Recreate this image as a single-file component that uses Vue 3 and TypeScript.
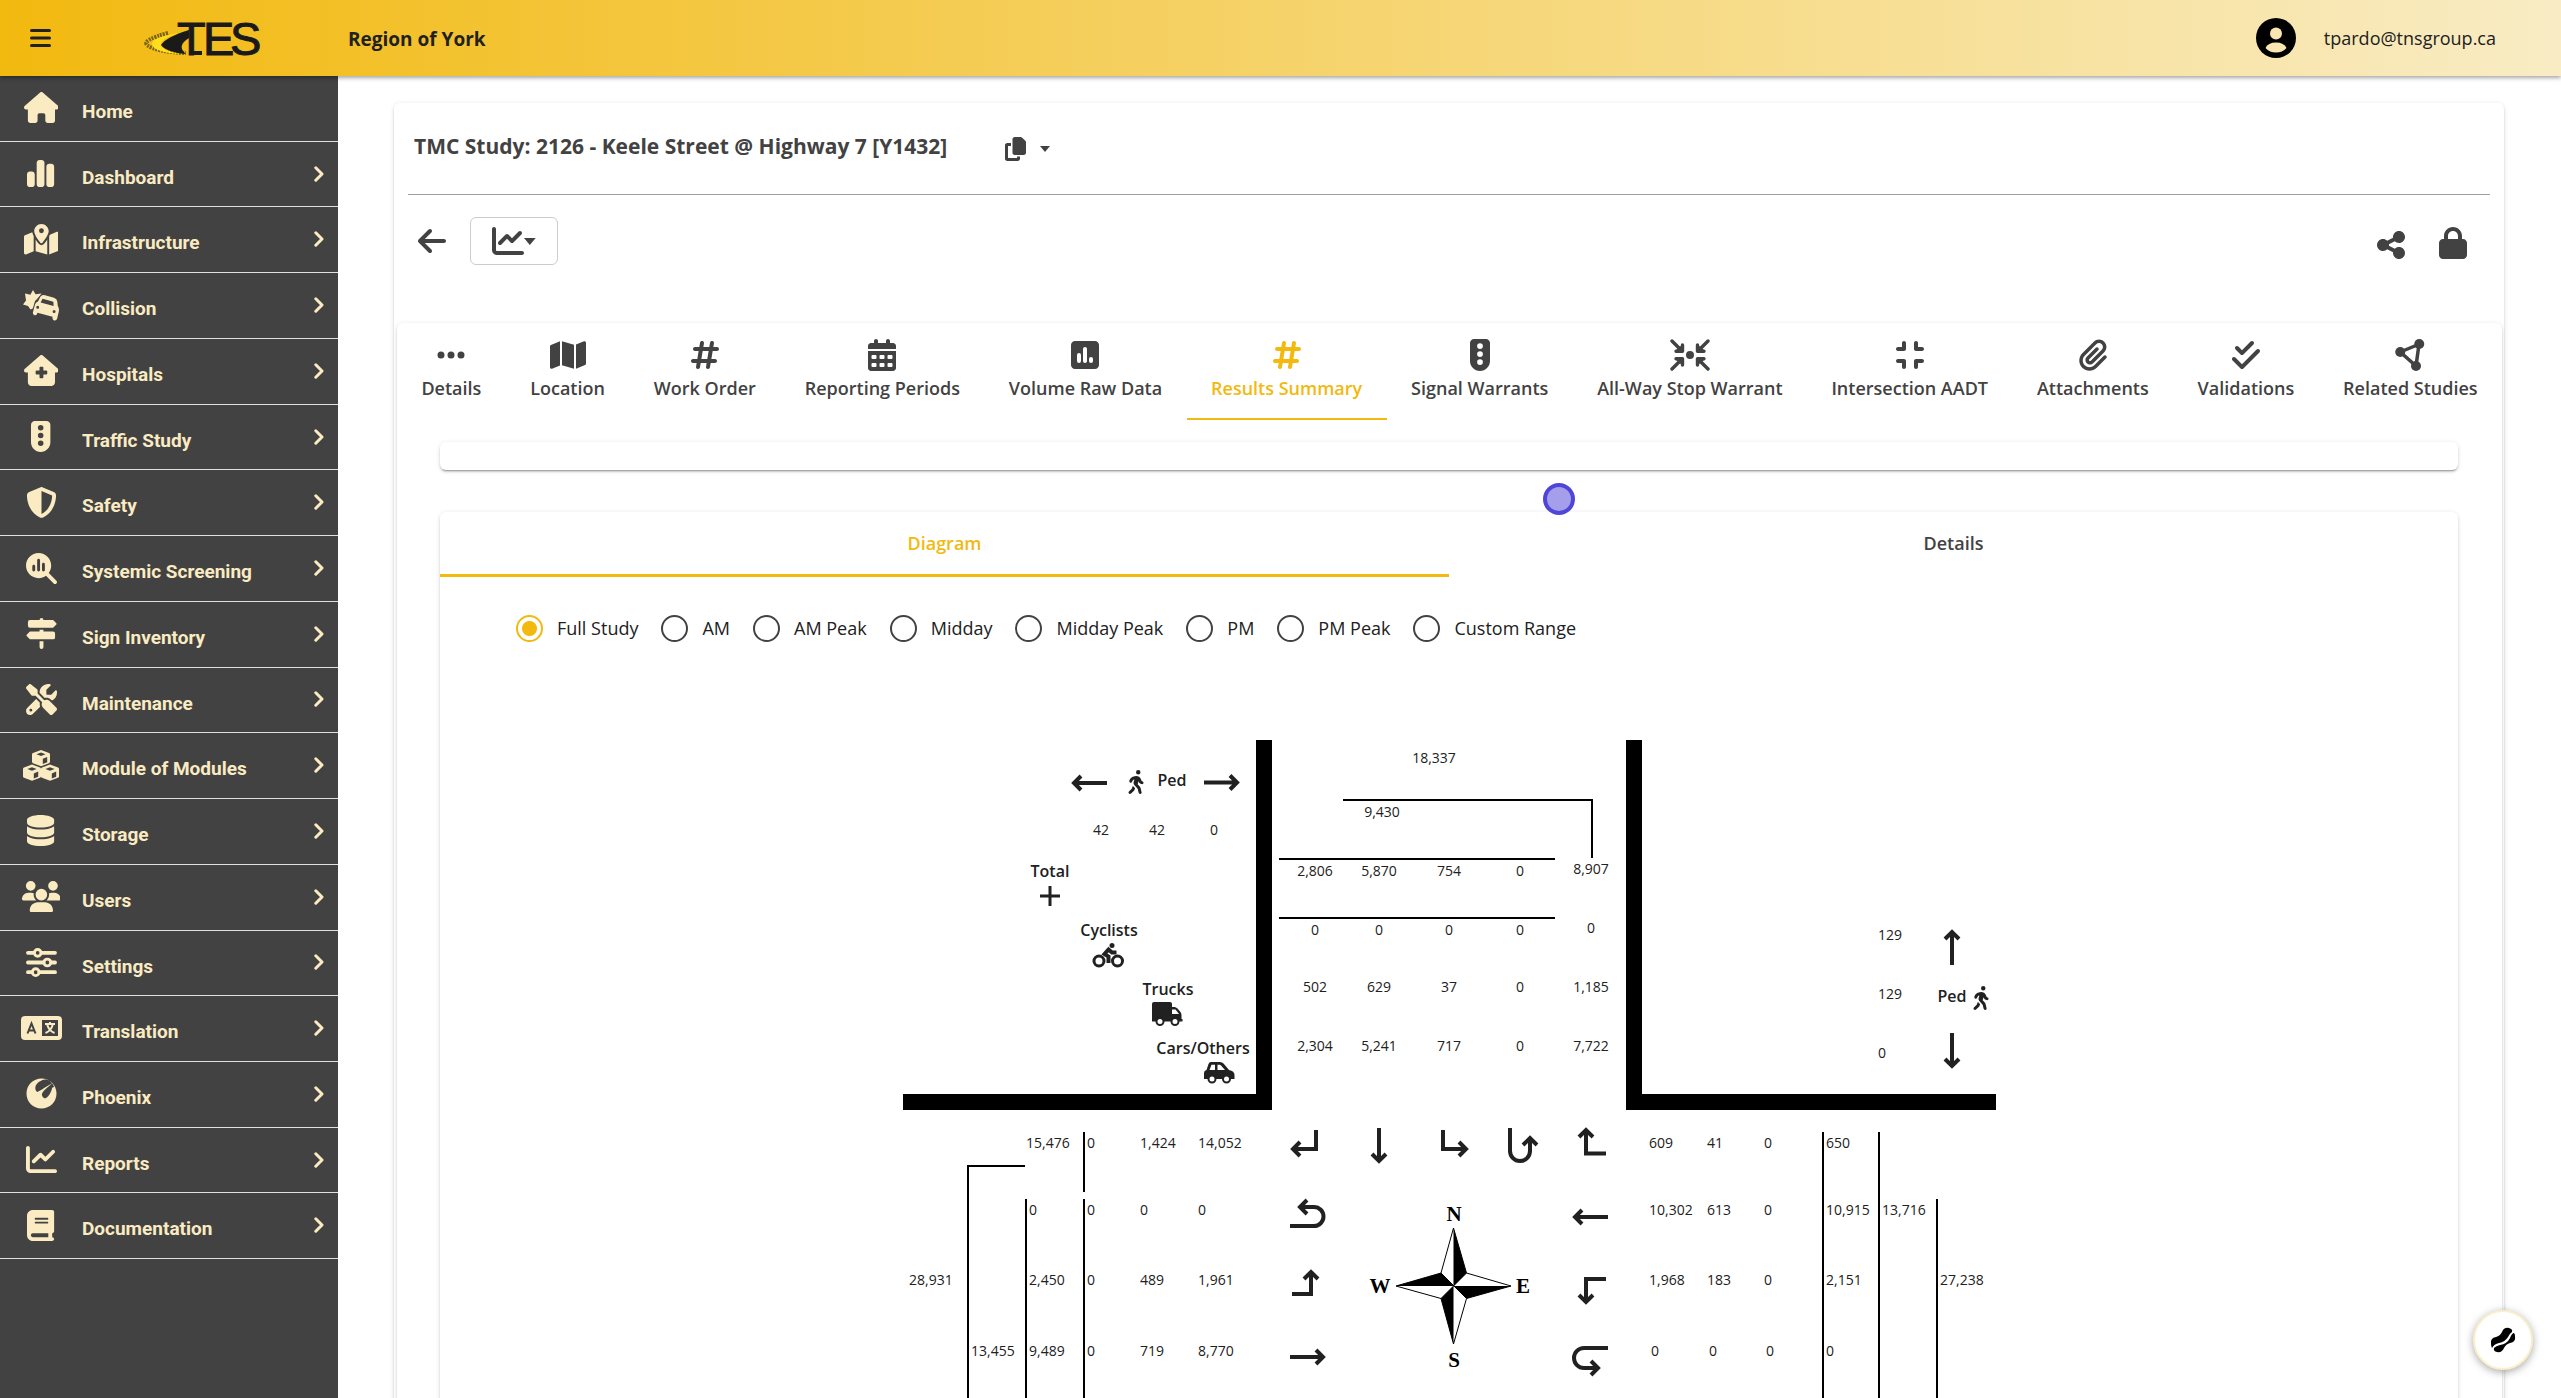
<script setup lang="ts">
import { h, ref } from 'vue'

interface Part { d: string; s?: number }
interface Glyph { w: number; h: number; parts: Part[] }

const fa = (w: number, d: string): Glyph => ({ w, h: 512, parts: [{ d }] })
const cube = (x: number, y: number): Part => ({
  d: `M${x} ${y - 8}l8 3q1 .4 1 1.4v7.4q0 1-1 1.4l-8 3-8-3q-1-.4-1-1.4v-7.4q0-1 1-1.4zM${x} ${y - 5.4}l-4.6 1.7 4.6 1.8 4.6-1.8zM${x + 1.8} ${y + 0.8}v5.2l4.4-1.8v-5.2z`,
})
const dot = (x: number, y: number, r: number) => `M${x - r} ${y}a${r} ${r} 0 1 0 ${2 * r} 0a${r} ${r} 0 1 0 ${-2 * r} 0z`
const cell = (x: number, y: number) => `M${x} ${y}h48q16 0 16 16v32q0 16-16 16h-48q-16 0-16-16v-32q0-16 16-16z`

const glyphs: Record<string, Glyph> = {
  house: fa(576, 'M575.8 255.5c0 18-15 32.1-32 32.1l-32 0 .7 160.2c0 2.7-.2 5.4-.5 8.1l0 16.2c0 22.1-17.9 40-40 40l-16 0c-1.1 0-2.2 0-3.3-.1c-1.4 .1-2.8 .1-4.2 .1L416 512l-24 0c-22.1 0-40-17.9-40-40l0-24 0-64c0-17.7-14.3-32-32-32l-64 0c-17.7 0-32 14.3-32 32l0 64 0 24c0 22.1-17.9 40-40 40l-24 0-31.9 0c-1.5 0-3-.1-4.5-.2c-1.2 .1-2.4 .2-3.6 .2l-16 0c-22.1 0-40-17.9-40-40l0-112c0-.9 0-1.9 .1-2.8l0-69.7-32 0c-18 0-32-14-32-32.1c0-9 3-17 10-24L266.4 8c7-7 15-8 22-8s15 2 21 7L564.8 231.5c8 7 12 15 11 24z'),
  chart: fa(448, 'M160 80c0-26.5 21.5-48 48-48l32 0c26.5 0 48 21.5 48 48l0 352c0 26.5-21.5 48-48 48l-32 0c-26.5 0-48-21.5-48-48l0-352zM0 272c0-26.5 21.5-48 48-48l32 0c26.5 0 48 21.5 48 48l0 160c0 26.5-21.5 48-48 48l-32 0c-26.5 0-48-21.5-48-48L0 272zM368 96l32 0c26.5 0 48 21.5 48 48l0 288c0 26.5-21.5 48-48 48l-32 0c-26.5 0-48-21.5-48-48l0-288c0-26.5 21.5-48 48-48z'),
  mapdot: fa(576, 'M408 120c0 54.6-73.1 151.9-105.2 192c-7.7 9.6-22 9.6-29.6 0C241.1 271.9 168 174.6 168 120C168 53.7 221.7 0 288 0s120 53.7 120 120zm8 80.4c3.5-6.9 6.7-13.8 9.6-20.6c.5-1.2 1-2.5 1.5-3.7l116-46.4C558.9 123.4 576 135 576 152l0 270.8c0 9.8-6 18.6-15.1 22.3L416 503l0-302.6zM137.6 138.3c2.4 14.1 7.2 28.3 12.8 41.5c2.9 6.8 6.1 13.7 9.6 20.6l0 251.4L32.9 502.7C17.1 509 0 497.4 0 480.4L0 209.6c0-9.8 6-18.6 15.1-22.3l122.6-49zM327.8 332c13.9-17.4 35.7-45.7 56.2-77l0 249.3L192 449.4 192 255c20.5 31.3 42.3 59.6 56.2 77c20.5 25.6 59.1 25.6 79.6 0zM288 152a40 40 0 1 0 0-80 40 40 0 1 0 0 80z'),
  crash: { w: 36, h: 31, parts: [
    { d: 'M10 0L12.5 4.2 18.6 3.4 14.5 8.5 12 11 9.8 18.5 7.5 19.4 5 16 0 14.5 3 10.5 2 3.6 7.4 4.8Z' },
    { d: 'M17.5 6.5Q19.5 4.6 22 5.2L31 7.7Q34 8.6 34.3 11.5L34.8 16Q36.4 18 35.8 21.5L34.2 28.5Q33.4 31 31 30.4 29 29.8 29.6 26.8L14.5 22.8Q13.6 26 11.4 25.2 9.4 24.6 10 22L12 14.6Q13 12 15 11.5ZM19.6 8.8L17.6 12.4 30.6 16 30.4 11.7ZM13.2 17.2a1.5 1.5 0 1 0 3 0a1.5 1.5 0 1 0 -3 0zM29.6 21.6a1.5 1.5 0 1 0 3 0a1.5 1.5 0 1 0 -3 0z' }] },
  hospital: fa(576, 'M575.8 255.5c0 18-15 32.1-32 32.1l-32 0 .7 160.2c0 35.5-22.5 64.2-56.5 64.2L128 512c-35.3 0-64-28.7-64-64l0-160.4-32 0c-18 0-32-14-32-32.1c0-9 3-17 10-24L266.4 8c7-7 15-8 22-8s15 2 21 7L564.8 231.5c8 7 12 15 11 24zM256 208v48h-48q-16 0-16 16v32q0 16 16 16h48v48q0 16 16 16h32q16 0 16-16v-48h48q16 0 16-16v-32q0-16-16-16h-48v-48q0-16-16-16h-32q-16 0-16 16z'),
  signal: fa(320, 'M64 0C28.7 0 0 28.7 0 64L0 352c0 88.4 71.6 160 160 160s160-71.6 160-160l0-288c0-35.3-28.7-64-64-64L64 0z' + dot(160, 112, 46) + dot(160, 240, 46) + dot(160, 368, 46)),
  shield: fa(512, 'M256 0c4.6 0 9.2 1 13.4 2.9L457.7 82.8c22 9.3 38.4 31 38.3 57.2c-.5 99.2-41.3 280.7-213.6 363.2c-16.7 8-36.1 8-52.8 0C57.3 420.7 16.5 239.2 16 140c-.1-26.2 16.3-47.9 38.3-57.2L242.7 2.9C246.8 1 251.4 0 256 0zm0 66.8l0 378.1C394 378 431.1 230.1 432 141.4L256 66.8z'),
  search: fa(512, 'M416 208c0 45.9-14.9 88.3-40 122.7L502.6 457.4c12.5 12.5 12.5 32.8 0 45.3s-32.8 12.5-45.3 0L330.7 376c-34.4 25.2-76.8 40-122.7 40C93.1 416 0 322.9 0 208S93.1 0 208 0S416 93.1 416 208zm-312 8l0 64c0 13.3 10.7 24 24 24s24-10.7 24-24l0-64c0-13.3-10.7-24-24-24s-24 10.7-24 24zm80-96l0 160c0 13.3 10.7 24 24 24s24-10.7 24-24l0-160c0-13.3-10.7-24-24-24s-24 10.7-24 24zm80 64l0 96c0 13.3 10.7 24 24 24s24-10.7 24-24l0-96c0-13.3-10.7-24-24-24s-24 10.7-24 24z'),
  signs: fa(512, 'M224 32q0-32 32-32t32 32h153.4q7 0 11.3 4.7l48 48q11 11.3 0 22.6l-48 48q-4.300 4.7-11.3 4.7H64q-32 0-32-32V64q0-32 32-32zM224 192h64v32h160q32 0 32 32v64q0 32-32 32H70.6q-7 0-11.3-4.7l-48-48q-11-11.3 0-22.6l48-48q4.3-4.7 11.3-4.7H224zM224 384h64v96q0 32-32 32t-32-32z'),
  tools: fa(512, 'M78.6 5C69.1-2.4 55.6-1.5 47 7L7 47c-8.5 8.5-9.4 22-2.1 31.6l80 104c4.5 5.9 11.6 9.4 19 9.4l54.1 0 109 109c-14.7 29-10 65.4 14.3 89.6l112 112c12.5 12.5 32.8 12.5 45.3 0l64-64c12.5-12.5 12.5-32.8 0-45.3l-112-112c-24.2-24.2-60.6-29-89.6-14.3l-109-109 0-54.1c0-7.5-3.5-14.5-9.4-19L78.6 5zM19.9 396.1C7.2 408.8 0 426.1 0 444.1C0 481.6 30.4 512 67.9 512c18 0 35.3-7.2 48-19.9L233.7 374.3c-7.8-20.9-9-43.6-3.6-65.1l-61.7-61.7L19.9 396.1zM512 144c0-10.5-1.1-20.7-3.2-30.5c-2.4-11.2-16.1-14.1-24.2-6l-63.9 63.9c-3 3-7.1 4.7-11.3 4.7L352 176c-8.8 0-16-7.2-16-16l0-57.4c0-4.2 1.7-8.3 4.7-11.3l63.9-63.9c8.1-8.1 5.2-21.8-6-24.2C388.7 1.1 378.5 0 368 0C288.5 0 224 64.5 224 144l0 .8 85.3 85.3c36-9.1 75.8 .5 104 28.7L429 274.5c49-23 83-72.8 83-130.5zM56 432a24 24 0 1 1 48 0 24 24 0 1 1 -48 0z'),
  cubes: { w: 36, h: 31, parts: [cube(18, 8), cube(9, 22.6), cube(27, 22.6)] },
  database: fa(448, 'M448 80l0 48c0 44.2-100.3 80-224 80S0 172.2 0 128L0 80C0 35.8 100.3 0 224 0S448 35.8 448 80zM393.2 214.7c20.8-7.4 39.9-16.9 54.8-28.6L448 288c0 44.2-100.3 80-224 80S0 332.2 0 288L0 186.1c14.9 11.8 34 21.2 54.8 28.6C99.7 230.7 159.5 240 224 240s124.3-9.3 169.2-25.3zM0 346.1c14.9 11.8 34 21.2 54.8 28.6C99.7 390.7 159.5 400 224 400s124.3-9.3 169.2-25.3c20.8-7.4 39.9-16.9 54.8-28.6l0 85.9c0 44.2-100.3 80-224 80S0 476.2 0 432l0-85.9z'),
  users: fa(640, 'M144 0a80 80 0 1 1 0 160A80 80 0 1 1 144 0zM512 0a80 80 0 1 1 0 160A80 80 0 1 1 512 0zM0 298.7C0 239.8 47.8 192 106.7 192l42.7 0c15.9 0 31 3.5 44.6 9.7c-1.3 7.2-1.9 14.7-1.9 22.3c0 38.2 16.8 72.5 43.3 96c-.2 0-.4 0-.7 0L21.3 320C9.6 320 0 310.4 0 298.7zM405.3 320c-.2 0-.4 0-.7 0c26.6-23.5 43.3-57.8 43.3-96c0-7.6-.7-15-1.9-22.3c13.6-6.3 28.7-9.7 44.6-9.7l42.7 0C592.2 192 640 239.8 640 298.7c0 11.8-9.6 21.3-21.3 21.3l-213.3 0zM224 224a96 96 0 1 1 192 0 96 96 0 1 1 -192 0zM128 485.3C128 411.7 187.7 352 261.3 352l117.3 0C452.3 352 512 411.7 512 485.3c0 14.7-11.9 26.7-26.7 26.7l-330.7 0c-14.7 0-26.7-11.9-26.7-26.7z'),
  sliders: { w: 512, h: 512, parts: [
    { d: 'M32 96H130M256 96H480M32 256H290M414 256H480M32 416H98M222 416H480', s: 62 },
    { d: dot(193, 96, 56) + dot(352, 256, 56) + dot(160, 416, 56), s: 48 }] },
  phoenix: fa(512, 'M256 8C390 8 504 115 504 256C504 395 395 504 256 504C118 504 8 395 8 256C8 115 120 8 256 8ZM345 22C240 30 170 85 155 150C150 185 160 215 185 232C215 215 265 195 300 165L445 78C350 165 270 215 262 270C265 320 300 345 330 330C380 300 420 225 432 160L462 150C455 100 400 50 345 22Z'),
  line: fa(512, 'M64 64c0-17.7-14.3-32-32-32S0 46.3 0 64L0 400c0 44.2 35.8 80 80 80l400 0c17.7 0 32-14.3 32-32s-14.3-32-32-32L80 416c-8.8 0-16-7.2-16-16L64 64zm406.6 86.6c12.5-12.5 12.5-32.8 0-45.3s-32.8-12.5-45.3 0L320 210.7l-57.4-57.4c-12.5-12.5-32.8-12.5-45.3 0l-112 112c-12.5 12.5-12.5 32.8 0 45.3s32.8 12.5 45.3 0L240 221.3l57.4 57.4c12.5 12.5 32.8 12.5 45.3 0l128-128z'),
  book: fa(448, 'M96 0C43 0 0 43 0 96L0 416c0 53 43 96 96 96l288 0 32 0c17.7 0 32-14.3 32-32s-14.3-32-32-32l0-64c17.7 0 32-14.3 32-32l0-320c0-17.7-14.3-32-32-32L384 0 96 0zm0 384l256 0 0 64L96 448c-17.7 0-32-14.3-32-32s14.3-32 32-32zm32-240c0-8.8 7.2-16 16-16l192 0c8.8 0 16 7.2 16 16s-7.2 16-16 16l-192 0c-8.8 0-16-7.2-16-16zm16 48l192 0c8.8 0 16 7.2 16 16s-7.2 16-16 16l-192 0c-8.8 0-16-7.2-16-16s7.2-16 16-16z'),
  bars: { w: 448, h: 512, parts: [{ d: 'M32 96H416M32 256H416M32 416H416', s: 64 }] },
  chevron: { w: 10, h: 16, parts: [{ d: 'M1.8 1.8L8 8 1.8 14.2', s: 3 }] },
  caret: { w: 10, h: 6, parts: [{ d: 'M0 0H10L5 6Z' }] },
  back: fa(448, 'M9.4 233.4c-12.5 12.5-12.5 32.8 0 45.3l160 160c12.5 12.5 32.8 12.5 45.3 0s12.5-32.8 0-45.3L109.2 288 416 288c17.7 0 32-14.3 32-32s-14.3-32-32-32l-306.7 0L214.6 118.6c12.5-12.5 12.5-32.8 0-45.3s-32.8-12.5-45.3 0l-160 160z'),
  copy: fa(448, 'M208 0L332.1 0c12.7 0 24.9 5.1 33.9 14.1l67.9 67.9c9 9 14.1 21.2 14.1 33.9L448 336c0 26.5-21.5 48-48 48l-192 0c-26.5 0-48-21.5-48-48l0-288c0-26.5 21.5-48 48-48zM48 128l80 0 0 64-64 0 0 256 192 0 0-32 64 0 0 48c0 26.5-21.5 48-48 48L48 512c-26.5 0-48-21.5-48-48L0 176c0-26.5 21.5-48 48-48z'),
  share: fa(448, 'M352 224c53 0 96-43 96-96s-43-96-96-96s-96 43-96 96c0 4 .2 8 .7 11.9l-94.1 47C145.4 170.2 121.9 160 96 160c-53 0-96 43-96 96s43 96 96 96c25.9 0 49.4-10.2 66.6-26.9l94.1 47c-.5 3.9-.7 7.8-.7 11.9c0 53 43 96 96 96s96-43 96-96s-43-96-96-96c-25.9 0-49.4 10.2-66.6 26.9l-94.1-47c.5-3.9 .7-7.8 .7-11.9s-.2-8-.7-11.9l94.1-47C302.6 213.8 326.1 224 352 224z'),
  lock: fa(448, 'M144 144l0 48 160 0 0-48c0-44.2-35.8-80-80-80s-80 35.8-80 80zM80 192l0-48C80 64.5 144.5 0 224 0s144 64.5 144 144l0 48 16 0c35.3 0 64 28.7 64 64l0 192c0 35.3-28.7 64-64 64L64 512c-35.3 0-64-28.7-64-64L0 256c0-35.3 28.7-64 64-64l16 0z'),
  dots: fa(448, dot(64, 256, 56) + dot(224, 256, 56) + dot(384, 256, 56)),
  map: fa(576, 'M384 476.1L192 421.2l0-385.3L384 90.8l0 385.3zm32-1.2l0-386.5L543.1 37.5c15.8-6.3 32.9 5.3 32.9 22.3l0 334.8c0 9.8-6 18.6-15.1 22.3L416 474.8zM15.1 95.1L160 37.2l0 386.5L32.9 474.5C17.1 480.8 0 469.2 0 452.2L0 117.4c0-9.8 6-18.6 15.1-22.3z'),
  hash: fa(448, 'M181.3 32.4c17.4 2.9 29.2 19.4 26.3 36.8L197.8 128l95.1 0 11.5-69.3c2.9-17.4 19.4-29.2 36.8-26.3s29.2 19.4 26.3 36.8L357.8 128l58.2 0c17.7 0 32 14.3 32 32s-14.3 32-32 32l-68.9 0L325.8 320l58.2 0c17.7 0 32 14.3 32 32s-14.3 32-32 32l-68.9 0-11.5 69.3c-2.9 17.4-19.4 29.2-36.8 26.3s-29.2-19.4-26.3-36.8l9.8-58.7-95.1 0-11.5 69.3c-2.9 17.4-19.4 29.2-36.8 26.3s-29.2-19.4-26.3-36.8L90.2 384 32 384c-17.7 0-32-14.3-32-32s14.3-32 32-32l68.9 0 21.3-128L64 192c-17.7 0-32-14.3-32-32s14.3-32 32-32l68.9 0 11.5-69.3c2.9-17.4 19.4-29.2 36.8-26.3zM187.1 192L165.8 320l95.1 0 21.3-128-95.1 0z'),
  calendar: fa(448, 'M128 0c17.7 0 32 14.3 32 32l0 32 128 0 0-32c0-17.7 14.3-32 32-32s32 14.3 32 32l0 32 48 0c26.5 0 48 21.5 48 48l0 48L0 160l0-48C0 85.5 21.5 64 48 64l48 0 0-32c0-17.7 14.3-32 32-32zM0 192l448 0 0 272c0 26.5-21.5 48-48 48L48 512c-26.5 0-48-21.5-48-48L0 192z' + cell(72, 256) + cell(200, 256) + cell(328, 256) + cell(72, 384) + cell(200, 384) + cell(328, 384)),
  poll: fa(448, 'M448 96c0-35.3-28.7-64-64-64L64 32C28.7 32 0 60.7 0 96L0 416c0 35.3 28.7 64 64 64l320 0c35.3 0 64-28.7 64-64l0-320zM192 160a32 32 0 0 1 64 0V352a32 32 0 0 1 -64 0zM96 256a32 32 0 0 1 64 0V352a32 32 0 0 1 -64 0zM288 320a32 32 0 0 1 64 0V352a32 32 0 0 1 -64 0z'),
  converge: { w: 40, h: 32, parts: [
    { d: 'M2 2L11 11M38 2L29 11M2 30L11 21M38 30L29 21M6 12.3H12.5V6M34 12.3H27.5V6M6 19.7H12.5V26M34 19.7H27.5V26', s: 3.4 },
    { d: dot(20, 16, 4) + 'M6 11H12V6ZM34 11H28V6ZM6 21H12V26ZM34 21H28V26Z' }] },
  compress: fa(448, 'M160 64c0-17.7-14.3-32-32-32s-32 14.3-32 32l0 64-64 0c-17.7 0-32 14.3-32 32s14.3 32 32 32l96 0c17.7 0 32-14.3 32-32l0-96zM32 320c-17.7 0-32 14.3-32 32s14.3 32 32 32l64 0 0 64c0 17.7 14.3 32 32 32s32-14.3 32-32l0-96c0-17.7-14.3-32-32-32l-96 0zM352 64c0-17.7-14.3-32-32-32s-32 14.3-32 32l0 96c0 17.7 14.3 32 32 32l96 0c17.7 0 32-14.3 32-32s-14.3-32-32-32l-64 0 0-64zM320 320c-17.7 0-32 14.3-32 32l0 96c0 17.7 14.3 32 32 32s32-14.3 32-32l0-64 64 0c17.7 0 32-14.3 32-32s-14.3-32-32-32l-96 0z'),
  clip: fa(448, 'M364.2 83.8c-24.4-24.4-64-24.4-88.4 0l-184 184c-42.1 42.1-42.1 110.3 0 152.4s110.3 42.1 152.4 0l152-152c10.9-10.9 28.7-10.9 39.6 0s10.9 28.7 0 39.6l-152 152c-64 64-167.6 64-231.6 0s-64-167.6 0-231.6l184-184c46.3-46.3 121.3-46.3 167.6 0s46.3 121.3 0 167.6l-176 176c-28.6 28.6-75 28.6-103.6 0s-28.6-75 0-103.6l144-144c10.9-10.9 28.7-10.9 39.6 0s10.9 28.7 0 39.6l-144 144c-6.7 6.7-6.7 17.7 0 24.4s17.7 6.7 24.4 0l176-176c24.4-24.4 24.4-64 0-88.4z'),
  checks: fa(448, 'M342.6 86.6c12.5-12.5 12.5-32.8 0-45.3s-32.8-12.5-45.3 0L160 178.7l-57.4-57.4c-12.5-12.5-32.8-12.5-45.3 0s-12.5 32.8 0 45.3l80 80c12.5 12.5 32.8 12.5 45.3 0l160-160zm96 128c12.5-12.5 12.5-32.8 0-45.3s-32.8-12.5-45.3 0L160 402.7 54.6 297.4c-12.5-12.5-32.8-12.5-45.3 0s-12.5 32.8 0 45.3l128 128c12.5 12.5 32.8 12.5 45.3 0l256-256z'),
  nodes: { w: 512, h: 512, parts: [{ d: 'M100 208L400 84L352 432Z', s: 56 }, { d: dot(100, 208, 80) }, { d: dot(404, 80, 80) }, { d: dot(352, 432, 80) }] },
  walk: fa(320, 'M160 48a48 48 0 1 1 96 0 48 48 0 1 1 -96 0zM126.5 199.3c-1 .4-1.9 .8-2.9 1.2l-8 3.5c-16.4 7.3-29 21.2-34.7 38.2l-2.6 7.8c-5.6 16.8-23.7 25.8-40.5 20.2s-25.8-23.7-20.2-40.5l2.6-7.8c11.4-34.1 36.6-61.9 69.4-76.5l8-3.5c20.8-9.2 43.3-14 66.1-14c44.6 0 84.8 26.8 101.9 67.9L281 232.7l21.4 10.7c15.8 7.9 22.2 27.1 14.3 42.9s-27.1 22.2-42.9 14.3L247 287.3c-10.3-5.2-18.4-13.8-22.8-24.5l-9.6-23-19.3 65.5 49.5 54c5.4 5.9 9.2 13 11.2 20.8l23 92.1c4.3 17.1-6.1 34.5-23.3 38.8s-34.5-6.1-38.8-23.3l-22-88.1-70.7-77.1c-14.8-16.1-20.3-38.6-14.7-59.7l16.9-63.5zM68.7 398l25-62.4c2.1 3 4.5 5.8 7 8.6l40.7 44.4-14.5 36.2c-2.4 6-6 11.5-10.6 16.1L54.6 502.6c-12.5 12.5-32.8 12.5-45.3 0s-12.5-32.8 0-45.3L68.7 398z'),
}

const Icon = (props: { name: string }) => {
  const g = glyphs[props.name]
  return h('svg', { class: 'icon', viewBox: `0 0 ${g.w} ${g.h}`, style: { width: `${g.w / g.h}em` }, 'aria-hidden': 'true' },
    g.parts.map(p => h('path', p.s
      ? { d: p.d, fill: 'none', stroke: 'currentColor', 'stroke-width': p.s, 'stroke-linecap': 'round', 'stroke-linejoin': 'round' }
      : { d: p.d, fill: 'currentColor', 'fill-rule': 'evenodd' })))
}
Icon.props = ['name']

const menu = [
  ['house', 'Home'], ['chart', 'Dashboard'], ['mapdot', 'Infrastructure'], ['crash', 'Collision'],
  ['hospital', 'Hospitals'], ['signal', 'Traffic Study'], ['shield', 'Safety'], ['search', 'Systemic Screening'],
  ['signs', 'Sign Inventory'], ['tools', 'Maintenance'], ['cubes', 'Module of Modules'], ['database', 'Storage'],
  ['users', 'Users'], ['sliders', 'Settings'], ['language', 'Translation'], ['phoenix', 'Phoenix'],
  ['line', 'Reports'], ['book', 'Documentation'],
]

const tabs = [
  ['dots', 'Details'], ['map', 'Location'], ['hash', 'Work Order'], ['calendar', 'Reporting Periods'],
  ['poll', 'Volume Raw Data'], ['hash', 'Results Summary'], ['signal', 'Signal Warrants'],
  ['converge', 'All-Way Stop Warrant'], ['compress', 'Intersection AADT'], ['clip', 'Attachments'],
  ['checks', 'Validations'], ['nodes', 'Related Studies'],
]
const activeTab = ref('Results Summary')
const views = ['Diagram', 'Details']
const activeView = ref('Diagram')
const periods = ['Full Study', 'AM', 'AM Peak', 'Midday', 'Midday Peak', 'PM', 'PM Peak', 'Custom Range']
const period = ref('Full Study')

type Label = [number, number, string]

const centered: Label[] = [
  [198, 95, '42'], [254, 95, '42'], [311, 95, '0'],
  [531, 23, '18,337'], [479, 77, '9,430'],
  [412, 136, '2,806'], [476, 136, '5,870'], [546, 136, '754'], [617, 136, '0'], [688, 134, '8,907'],
  [412, 195, '0'], [476, 195, '0'], [546, 195, '0'], [617, 195, '0'], [688, 193, '0'],
  [412, 252, '502'], [476, 252, '629'], [546, 252, '37'], [617, 252, '0'], [688, 252, '1,185'],
  [412, 311, '2,304'], [476, 311, '5,241'], [546, 311, '717'], [617, 311, '0'], [688, 311, '7,722'],
]
const started: Label[] = [
  [975, 200, '129'], [975, 259, '129'], [975, 318, '0'],
  [123, 408, '15,476'], [184, 408, '0'], [237, 408, '1,424'], [295, 408, '14,052'],
  [126, 475, '0'], [184, 475, '0'], [237, 475, '0'], [295, 475, '0'],
  [6, 545, '28,931'], [126, 545, '2,450'], [184, 545, '0'], [237, 545, '489'], [295, 545, '1,961'],
  [68, 616, '13,455'], [126, 616, '9,489'], [184, 616, '0'], [237, 616, '719'], [295, 616, '8,770'],
  [746, 408, '609'], [804, 408, '41'], [861, 408, '0'], [923, 408, '650'],
  [746, 475, '10,302'], [804, 475, '613'], [861, 475, '0'], [923, 475, '10,915'], [979, 475, '13,716'],
  [746, 545, '1,968'], [804, 545, '183'], [861, 545, '0'], [923, 545, '2,151'], [1037, 545, '27,238'],
  [748, 616, '0'], [806, 616, '0'], [863, 616, '0'], [923, 616, '0'],
]
const headings: Label[] = [
  [269, 46, 'Ped'], [147, 137, 'Total'], [206, 196, 'Cyclists'], [265, 255, 'Trucks'], [300, 314, 'Cars/Others'], [1049, 262, 'Ped'],
]
const rules = [
  'M440 60H689V118', 'M376 119H652', 'M376 178H652',
  'M122 426H65V700', 'M123 459V700', 'M181 392V452M181 459V700',
  'M920 392V700', 'M976 392V700', 'M1034 459V700',
]
const arrows = [
  'M204 43H172M178 36L171 43 178 50', 'M301 42.5H333M327 35.5L334 42.5 327 49.5',
  'M1049 225V193M1042 199L1049 192 1056 199', 'M1049 293V325M1042 319L1049 326 1056 319',
  'M413 390V409H391M397 402L390 409 397 416', 'M476 388V420M469 414L476 421 483 414',
  'M540 390V409H562M556 402L563 409 556 416', 'M607 388V411A10 10 0 0 0 627 411V399M620 405L627 398 634 405',
  'M703 413.5H683V391M676 397L683 390 690 397',
  'M387 486H411A9.5 9.5 0 0 0 411 467H398M404 460L397 467 404 474',
  'M389 554H408V533M401 539L408 532 415 539', 'M387 617H419M413 610L420 617 413 624',
  'M705 477H673M679 470L672 477 679 484', 'M703 539H683V561M676 555L683 562 690 555',
  'M705 608H681A9.5 9.5 0 0 0 681 628H694M688 621L695 628 688 635',
]
</script>

<template>
  <div class="app">
    <header class="topbar">
      <button class="plain burger" aria-label="Toggle menu"><Icon name="bars" /></button>
      <svg class="logo" viewBox="0 -11 124 60" role="img" aria-label="TES">
        <path d="M24 14Q-2 21 3 26Q12 33 42 34" fill="none" stroke="#7a6417" stroke-width="4" stroke-dasharray="2 1" />
        <path d="M36 14Q8 18 8 25Q9 33 36 35Q14 30 17 24Q20 18 36 14Z" fill="#ffdf1b" />
        <path d="M45 11Q22 18 17 26Q22 33 42 35Q32 27 45 19Z" fill="#1a1a1a" />
        <g class="logo-type"><text x="33" y="36">T</text><text x="59" y="36">E</text><text x="86" y="36">S</text></g>
        <path d="M45 34H58" stroke="#1a1a1a" stroke-width="4" />
      </svg>
      <h1 class="region">Region of York</h1>
      <button class="plain account">
        <svg class="avatar" viewBox="0 0 40 40" aria-hidden="true"><circle cx="20" cy="20" r="20" /><circle class="cut" cx="20" cy="15.5" r="6" /><path class="cut" d="M9.5 30Q12 24.5 20 24.5T30.5 30Q26.5 34.5 20 34.5T9.5 30Z" /></svg>
        <span>tpardo@tnsgroup.ca</span>
      </button>
    </header>

    <div class="body">
      <nav class="sidebar">
        <ul>
          <li v-for="([icon, label], i) in menu" :key="label">
            <a href="#">
              <span class="menu-icon">
                <svg v-if="icon === 'language'" class="lang" viewBox="0 0 41 24" aria-hidden="true">
                  <path fill="currentColor" fill-rule="evenodd" d="M4 0H37Q41 0 41 4V20Q41 24 37 24H4Q0 24 0 20V4Q0 0 4 0ZM21 4V20H37V4Z" />
                  <path class="lang-a" d="M6.5 17.5L10.5 7.5 14.5 17.5M8 14.5H13" />
                  <path class="lang-b" d="M24 8H34M29 6V8M32 8Q30 15 24.5 17M26 8Q28 15 33.5 17" />
                </svg>
                <Icon v-else :name="icon" />
              </span>
              <span class="menu-label">{{ label }}</span>
              <Icon v-if="i > 0" class="chevron" name="chevron" />
            </a>
          </li>
        </ul>
      </nav>

      <main class="main">
        <section class="card study">
          <div class="title-row">
            <h2>TMC Study: 2126 - Keele Street @ Highway 7 [Y1432]</h2>
            <button class="plain copy" aria-label="Copy study"><Icon name="copy" /><Icon class="caret" name="caret" /></button>
          </div>
          <div class="toolbar">
            <button class="plain back" aria-label="Back"><Icon name="back" /></button>
            <button class="chart-button" aria-label="Charts"><Icon name="line" /><Icon class="caret" name="caret" /></button>
            <button class="plain share" aria-label="Share"><Icon name="share" /></button>
            <button class="plain lock" aria-label="Lock"><Icon name="lock" /></button>
          </div>

          <div class="card panel">
            <div class="tabs" role="tablist">
              <button v-for="[icon, label] in tabs" :key="label" role="tab" class="tab"
                :class="{ active: activeTab === label }" :aria-selected="activeTab === label" @click="activeTab = label">
                <Icon :name="icon" /><span>{{ label }}</span>
              </button>
            </div>
            <div class="card strip"></div>
            <div class="card result">
              <div class="views" role="tablist">
                <button v-for="v in views" :key="v" role="tab" class="view" :class="{ active: activeView === v }"
                  :aria-selected="activeView === v" @click="activeView = v">{{ v }}</button>
              </div>
              <div class="periods">
                <label v-for="p in periods" :key="p"><input v-model="period" type="radio" name="period" :value="p">{{ p }}</label>
              </div>

              <svg class="diagram" width="1093" height="700" viewBox="0 0 1093 700">
                <path class="road" d="M361 0V362H0M731 0V362H1093" />
                <path v-for="d in rules" :key="d" class="rule" :d="d" />
                <path v-for="d in arrows" :key="d" class="arrow" :d="d" />
                <text v-for="([x, y, t], i) in centered" :key="'c' + i" class="mid" :x="x" :y="y">{{ t }}</text>
                <text v-for="([x, y, t], i) in started" :key="'s' + i" :x="x" :y="y">{{ t }}</text>
                <text v-for="([x, y, t], i) in headings" :key="'h' + i" class="mid head" :x="x" :y="y">{{ t }}</text>

                <svg x="225" y="30" width="16" height="24" viewBox="0 0 320 512"><path :d="glyphs.walk.parts[0].d" /></svg>
                <svg x="1070" y="246" width="16" height="24" viewBox="0 0 320 512"><path :d="glyphs.walk.parts[0].d" /></svg>
                <path class="plus" d="M137 156H157M147 146V166" />
                <g transform="translate(190 203)">
                  <circle class="wheel" cx="6" cy="18" r="5" /><circle class="wheel" cx="24.5" cy="18" r="5" />
                  <circle cx="19" cy="2.5" r="2.5" /><path class="rider" d="M23.5 9.5H19L15.5 6.5 11.5 11 15.5 13.5V20" />
                </g>
                <g transform="translate(249 262)">
                  <path fill-rule="evenodd" d="M2 0H18Q20 0 20 2V5H22.5Q24 5 25.5 6.5L28.5 10Q29.5 11.5 29.5 13V17H30.5V19.5H0V2Q0 0 2 0ZM20 7.5V12H27L23.5 7.5Z" />
                  <circle class="tyre" cx="8" cy="19.5" r="3.5" /><circle class="tyre" cx="23" cy="19.5" r="3.5" />
                </g>
                <g transform="translate(301 322)">
                  <path fill-rule="evenodd" d="M7 0H16Q18 0 19.5 1.5L25 8Q30.5 9 30.5 13V17H0V11Q0 8.5 2.5 8L4.5 2Q5.2 0 7 0ZM7.5 2.8L5.5 8H11V2.8ZM13.5 2.8V8H21L17 3.5Q16.5 2.8 15.5 2.8Z" />
                  <circle class="tyre" cx="8" cy="17" r="3.5" /><circle class="tyre" cx="22.5" cy="17" r="3.5" />
                </g>

                <g class="compass">
                  <path class="light" d="M550.5 488L563.5 533 608 546 563.5 558.5 550.5 604 538 558.5 493 546 538 533Z" />
                  <path d="M550.5 488L563.5 533 550.5 546ZM608 546L563.5 558.5 550.5 546ZM550.5 604L538 558.5 550.5 546ZM493 546L538 533 550.5 546Z" />
                  <path class="light" d="M538 533L563.5 558.5M563.5 533L538 558.5" />
                  <text x="551" y="481">N</text><text x="477" y="553">W</text><text x="620" y="553">E</text><text x="551" y="627">S</text>
                </g>
              </svg>
            </div>
          </div>
        </section>
      </main>
    </div>

    <span class="pointer"></span>
    <button class="fab" aria-label="Assistant">
      <svg viewBox="0 0 28 28" aria-hidden="true">
        <path d="M2 18Q1 12 7 11Q11 10 13 6Q15 1 20 2Q24 3 23 6Q21 7 19 11Q16 16 10 17Q5 18 3 22Q2 20 2 18Z" />
        <path d="M26 10Q27 16 21 17Q17 18 15 22Q13 27 8 26Q4 25 5 22Q7 20 11 19Q18 18 21 12Q23 7 25 7Q26 8 26 10Z" />
      </svg>
    </button>
  </div>
</template>

<style>
body { margin: 0; overflow: hidden; }
.icon { display: block; height: 1em; flex: none; }
</style>

<style scoped>
.app { position: relative; display: flex; flex-direction: column; height: 100vh; overflow: hidden; background: #fff; color: #424242; font-family: "Segoe UI", "Open Sans", "Noto Sans", sans-serif; }
button { font-family: inherit; color: inherit; margin: 0; cursor: pointer; }
h1, h2 { margin: 0; }
.plain { border: 0; padding: 0; background: none; display: flex; align-items: center; }
.topbar { position: relative; z-index: 1; flex: none; display: flex; align-items: center; height: 76px; box-sizing: border-box; padding: 0 65px 0 30px; background: linear-gradient(90deg, #f2b90f, #f9ecc4); box-shadow: 0 2px 4px rgba(0, 0, 0, .35); color: #212121; }
.burger { font-size: 24px; width: 114px; }
.logo { width: 124px; height: 60px; }
.logo-type { font-family: "Liberation Sans", Arial, sans-serif; font-size: 47px; fill: #1a1a1a; stroke: #1a1a1a; stroke-width: 1px; }
.region { font-size: 19px; font-weight: 700; margin-left: 80px; padding-top: 1px; }
.account { margin-left: auto; gap: 28px; font-size: 18px; }
.avatar { width: 40px; height: 40px; fill: #000; }
.avatar .cut { fill: #fae6b2; }
.body { flex: 1; min-height: 0; display: flex; }
.sidebar { flex: none; width: 338px; background: #424242; }
.sidebar ul { list-style: none; margin: 0; padding: 0; }
.sidebar li { border-bottom: 1px solid #e0e0e0; }
.sidebar a { display: flex; align-items: center; padding: 15px 14px 16px 0; color: #faebc3; text-decoration: none; font: 700 19px/1.355 Roboto, sans-serif; }
.menu-icon { width: 82px; display: flex; justify-content: center; font-size: 31px; }
.menu-label { flex: 1; padding-top: 8px; }
.lang { width: 41px; height: 24px; }
.lang-a { fill: none; stroke: #424242; stroke-width: 2; }
.lang-b { fill: none; stroke: currentColor; stroke-width: 2; }
.chevron { font-size: 16px; }
.main { flex: 1; min-width: 0; padding: 27px 57px 0 56px; }
.card { background: #fff; border-radius: 6px; box-shadow: 0 3px 1px -2px rgba(0, 0, 0, .2), 0 2px 2px rgba(0, 0, 0, .14), 0 1px 5px rgba(0, 0, 0, .12); }
.study { padding-bottom: 40px; }
.title-row { display: flex; align-items: center; height: 92px; margin: 0 14px; padding: 0 6px; box-sizing: border-box; border-bottom: 1px solid #9e9e9e; }
.title-row h2 { font-size: 21px; line-height: 28px; font-weight: 700; padding-bottom: 6px; }
.copy { font-size: 24px; gap: 14px; margin-left: 58px; }
.copy .caret { font-size: 6px; }
.toolbar { display: flex; align-items: flex-start; height: 128px; box-sizing: border-box; padding: 22px 37px 0 24px; }
.toolbar .plain { height: 48px; }
.back { font-size: 32px; }
.chart-button { display: flex; align-items: center; justify-content: center; width: 88px; height: 48px; margin: 0 auto 0 24px; border: 1px solid #ccc; border-radius: 6px; background: #fff; font-size: 32px; padding: 0; }
.chart-button .caret { font-size: 7px; }
.share { font-size: 32px; margin-right: 34px; padding-top: 8px; }
.lock { font-size: 32px; padding-top: 4px; }
.panel { margin: 0 2px 0 3px; padding-bottom: 40px; }
.tabs { display: flex; }
.tab { flex: 1 1 auto; display: flex; flex-direction: column; align-items: center; gap: 5px; padding: 16px 0 18px; border: 0; border-bottom: 2px solid transparent; background: none; font-size: 32px; }
.tab span { font-size: 18px; line-height: 24px; font-weight: 600; white-space: nowrap; }
.tab.active, .view.active { color: #f2b90f; border-color: #f2b90f; }
.strip { height: 28px; margin: 22px 44px 42px 43px; }
.result { margin: 0 44px 0 43px; }
.views { display: flex; }
.view { flex: 1; height: 65px; padding: 0; border: 0; border-bottom: 3px solid transparent; background: none; font-size: 18px; font-weight: 600; }
.periods { display: flex; gap: 23px; padding: 38px 76px 98px; color: #212121; }
.periods label { display: flex; align-items: center; gap: 14px; font-size: 18px; line-height: 27px; white-space: nowrap; }
.periods input { appearance: none; width: 27px; height: 27px; margin: 0; border: 2px solid #424242; border-radius: 50%; }
.periods input:checked { border-color: #f2b90f; background: radial-gradient(circle, #f2b90f 7px, transparent 8px); }
.diagram { display: block; margin: 0 auto; fill: #212121; }
.diagram text { font-size: 14px; }
.diagram .mid { text-anchor: middle; }
.diagram .head { font-size: 16px; font-weight: 600; }
.road { fill: none; stroke: #000; stroke-width: 16; }
.rule { fill: none; stroke: #000; stroke-width: 2; }
.arrow { fill: none; stroke: #212121; stroke-width: 4; }
.plus { stroke: #212121; stroke-width: 3; }
.wheel { fill: none; stroke: #212121; stroke-width: 3; }
.rider { fill: none; stroke: #212121; stroke-width: 4; }
.tyre { fill: #fff; stroke: #212121; stroke-width: 2; }
.compass { fill: #000; }
.compass .light { fill: #fff; stroke: #000; stroke-width: 1; }
.compass text { font: 700 21px "Liberation Serif", "Times New Roman", serif; text-anchor: middle; }
.pointer { position: absolute; left: 1543px; top: 483px; width: 24px; height: 24px; border: 4px solid #4f46d8; border-radius: 50%; background: #a49eeb; }
.fab { position: fixed; right: 28px; bottom: 28px; width: 60px; height: 60px; display: flex; align-items: center; justify-content: center; border: 2px solid #fbeecb; border-radius: 50%; background: #fff; padding: 0; box-shadow: 0 2px 8px rgba(0, 0, 0, .35); }
.fab svg { width: 28px; height: 28px; fill: #000; }
</style>
